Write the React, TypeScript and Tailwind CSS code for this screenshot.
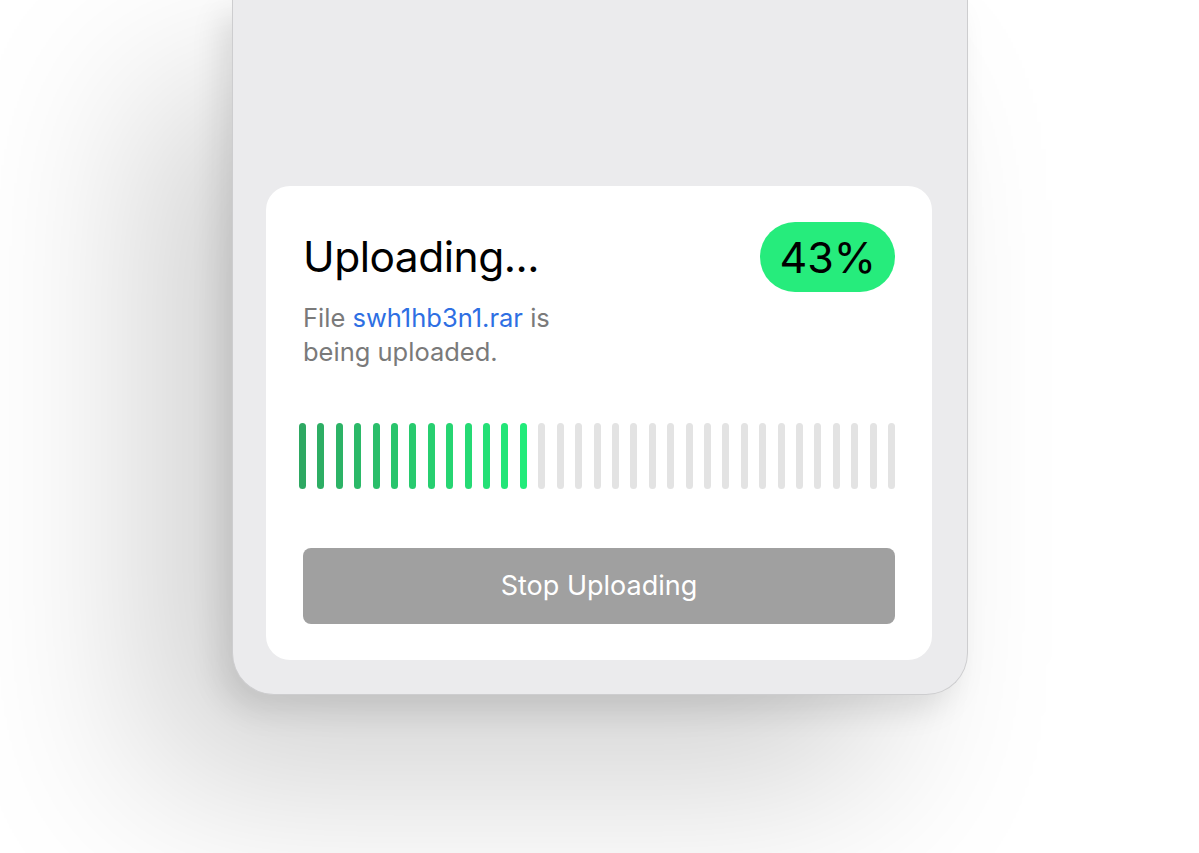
const TOTAL_BARS = 33;
const FILLED_BARS = 13;

function barColor(i: number) {
  // dark green -> bright green across the filled bars
  const t = FILLED_BARS > 1 ? i / (FILLED_BARS - 1) : 0;
  const from = [46, 168, 98];
  const to = [34, 235, 122];
  const c = from.map((f, k) => Math.round(f + (to[k] - f) * t));
  return `rgb(${c[0]}, ${c[1]}, ${c[2]})`;
}

function ProgressBars() {
  return (
    <div className="flex justify-between h-[66px] -ml-[4px]">
      {Array.from({ length: TOTAL_BARS }).map((_, i) => (
        <div
          key={i}
          className={`w-[7px] h-full rounded-full ${i < FILLED_BARS ? '' : 'bg-[#e3e3e3]'}`}
          style={i < FILLED_BARS ? { backgroundColor: barColor(i) } : undefined}
        />
      ))}
    </div>
  );
}

function UploadCard() {
  return (
    <div className="bg-white rounded-[24px] mt-[186px] ml-[33px] w-[666px] px-[37px] pt-[36px] pb-[36px]">
      <div className="flex items-center justify-between">
        <h2 className="text-[42.5px] leading-none tracking-[-0.5px] text-black">Uploading...</h2>
        <div className="h-[70px] px-[19px] rounded-full bg-[#26ec7c] flex items-center text-[43px] text-black">
          43%
        </div>
      </div>
      <p className="mt-[9px] text-[25.5px] leading-[34px] text-[#7a7a7a]">
        File <span className="text-[#2e6fe3]">swh1hb3n1.rar</span> is
        <br />
        being uploaded.
      </p>
      <div className="mt-[54px]">
        <ProgressBars />
      </div>
      <button className="mt-[59px] w-full h-[76px] rounded-[8px] bg-[#a0a0a0] text-white text-[27px]">
        Stop Uploading
      </button>
    </div>
  );
}

export default function App() {
  return (
    <div
      className="w-full h-[853px] overflow-hidden bg-white pl-[232px]"
      style={{ fontFamily: 'Inter, "Noto Sans", sans-serif' }}
    >
      <div className="w-[736px] h-[696px] bg-[#ebebed] border-x border-b border-[#cdcdcf] rounded-b-[42px] shadow-[-12px_16px_30px_rgba(0,0,0,0.10),-90px_90px_180px_rgba(0,0,0,0.18)]">
        <div className="pt-px -mt-px">
          <UploadCard />
        </div>
      </div>
    </div>
  );
}
